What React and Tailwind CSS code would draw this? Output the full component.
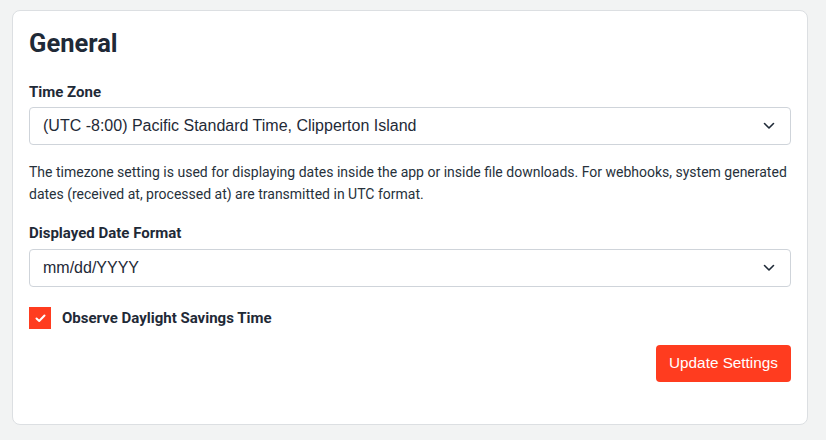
import React from "react";

const Chevron = () => (
  <svg width="12" height="8" viewBox="0 0 12 8" fill="none" className="shrink-0">
    <path d="M1.5 1.5L6 6L10.5 1.5" stroke="#1f2a37" strokeWidth="1.6" strokeLinecap="round" strokeLinejoin="round" />
  </svg>
);

const SelectBox = ({ value }) => (
  <div className="flex h-[38px] items-center justify-between rounded-[4px] border border-[#cfd4da] bg-white pl-[13px] pr-[15px]">
    <span className="font-['Liberation_Sans',Arial,sans-serif] text-[16px] text-[#1f2a37]">{value}</span>
    <Chevron />
  </div>
);

export default function App() {
  return (
    <div className="min-h-[440px] bg-[#f2f3f3] px-3 pt-[10px] font-['Roboto',sans-serif] text-[#1f2a37]">
      <div className="w-[796px] rounded-lg border border-[#dcdfe2] bg-white px-4 pb-[42px] pt-4">
        <h1 className="text-[25.5px] font-bold leading-8">General</h1>

        <label className="mt-[23px] block text-[15px] font-bold leading-5">Time Zone</label>
        <div className="mt-[5px]">
          <SelectBox value="(UTC -8:00) Pacific Standard Time, Clipperton Island" />
        </div>

        <p className="mt-4 text-[14px] leading-[22px] text-[#27313b]">
          The timezone setting is used for displaying dates inside the app or inside file downloads. For webhooks, system generated
          dates (received at, processed at) are transmitted in UTC format.
        </p>

        <label className="mt-[18px] block text-[15px] font-bold leading-5">Displayed Date Format</label>
        <div className="mt-[6px]">
          <SelectBox value="mm/dd/YYYY" />
        </div>

        <div className="mt-5 flex items-center gap-[11px]">
          <div className="flex h-[22px] w-[22px] items-center justify-center bg-[#ff3c1f]">
            <svg width="11" height="9" viewBox="0 0 11 9" fill="none">
              <path d="M1.5 4.5L4.2 7L9.5 1.5" stroke="white" strokeWidth="2" strokeLinecap="round" strokeLinejoin="round" />
            </svg>
          </div>
          <span className="text-[15px] font-bold leading-5">Observe Daylight Savings Time</span>
        </div>

        <div className="mt-4 flex justify-end">
          <button className="h-[37px] w-[135px] rounded-[4px] bg-[#ff3c1f] font-['Liberation_Sans',Arial,sans-serif] text-[15.3px] text-white">
            Update Settings
          </button>
        </div>
      </div>
    </div>
  );
}
